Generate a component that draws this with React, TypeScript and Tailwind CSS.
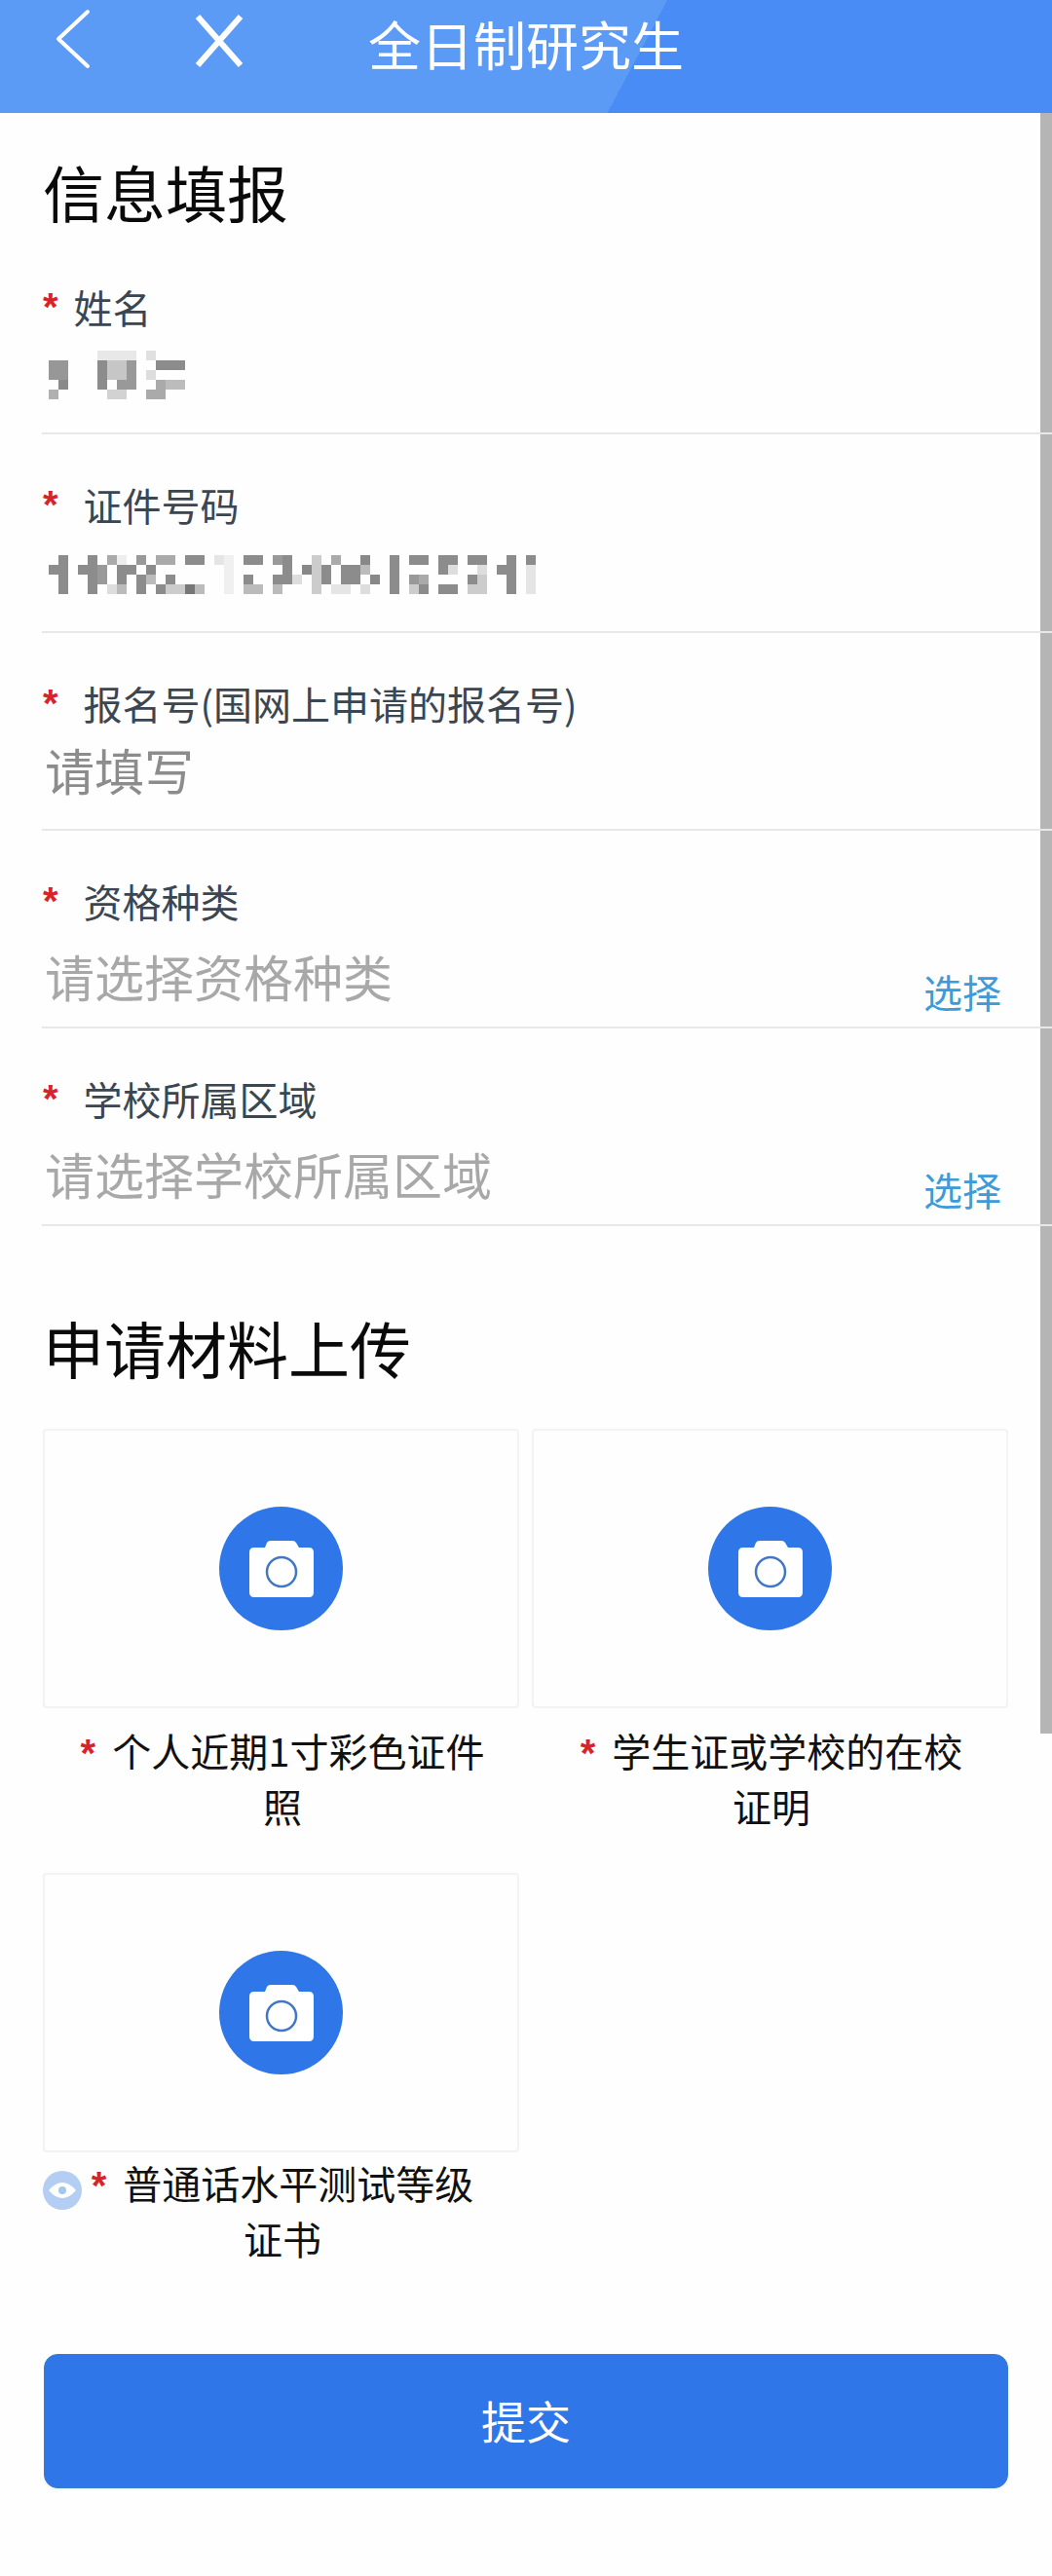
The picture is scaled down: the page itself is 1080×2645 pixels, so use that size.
import type { ReactNode } from "react";

type Cell = [number, number, number, number, string];

// blurred personal data: [x, y, w, h, colour], 10px mosaic cells
const nameCells: Cell[] = [
  [0, 10, 20, 20, "#979797"], [10, 30, 10, 10, "#8a8a8a"], [0, 40, 10, 10, "#b0b0b0"],
  [50, 0, 40, 10, "#e8e8e8"], [50, 10, 10, 30, "#8c8c8c"], [60, 10, 20, 20, "#c6c6c6"],
  [80, 10, 10, 30, "#999999"], [70, 30, 10, 10, "#999999"], [60, 40, 20, 10, "#d2d2d2"],
  [100, 0, 10, 10, "#e0e0e0"], [110, 10, 30, 10, "#8c8c8c"], [100, 20, 10, 10, "#dddddd"],
  [110, 30, 10, 10, "#aaaaaa"], [120, 30, 20, 10, "#bcbcbc"], [100, 40, 20, 10, "#aaaaaa"],
];

const idCells: Cell[] = [
  [0, 10, 10, 10, "#8c8c8c"], [10, 0, 10, 40, "#8c8c8c"],
  [30, 10, 10, 10, "#8c8c8c"], [40, 0, 10, 40, "#8c8c8c"], [50, 10, 10, 20, "#999999"],
  [60, 0, 10, 10, "#aaaaaa"], [60, 30, 10, 10, "#dddddd"], [70, 0, 10, 10, "#eeeeee"],
  [70, 10, 10, 20, "#8c8c8c"], [70, 30, 10, 10, "#bbbbbb"], [80, 10, 10, 10, "#8c8c8c"],
  [90, 0, 10, 10, "#999999"], [90, 20, 10, 20, "#8c8c8c"], [100, 10, 10, 10, "#8c8c8c"],
  [100, 20, 10, 10, "#bbbbbb"], [110, 0, 20, 10, "#aaaaaa"], [120, 20, 10, 10, "#8c8c8c"],
  [110, 30, 10, 10, "#8c8c8c"], [120, 30, 20, 10, "#cccccc"], [140, 0, 20, 10, "#8c8c8c"],
  [140, 30, 10, 10, "#777777"], [150, 30, 10, 10, "#bbbbbb"], [170, 0, 10, 10, "#e5e5e5"],
  [180, 0, 10, 40, "#f0f0f0"], [200, 0, 20, 10, "#8c8c8c"], [200, 20, 10, 10, "#8c8c8c"],
  [200, 30, 20, 10, "#bbbbbb"], [230, 0, 10, 10, "#999999"], [240, 0, 10, 30, "#8c8c8c"],
  [230, 20, 10, 10, "#8c8c8c"], [230, 30, 10, 10, "#bbbbbb"], [250, 20, 10, 10, "#dddddd"],
  [260, 10, 10, 10, "#888888"], [270, 0, 10, 40, "#cccccc"], [280, 10, 10, 20, "#8c8c8c"],
  [290, 0, 10, 10, "#aaaaaa"], [290, 30, 20, 10, "#e5e5e5"], [300, 10, 20, 20, "#8c8c8c"],
  [320, 0, 10, 10, "#888888"], [320, 10, 10, 10, "#bbbbbb"], [320, 30, 10, 10, "#dddddd"],
  [330, 20, 10, 10, "#888888"], [350, 0, 10, 40, "#8c8c8c"], [370, 0, 20, 10, "#8c8c8c"],
  [370, 20, 10, 10, "#999999"], [380, 20, 10, 10, "#aaaaaa"], [370, 30, 10, 10, "#cccccc"],
  [380, 30, 10, 10, "#8c8c8c"], [400, 0, 20, 10, "#8c8c8c"], [400, 10, 10, 10, "#8c8c8c"],
  [410, 10, 10, 10, "#dddddd"], [400, 30, 20, 10, "#8c8c8c"], [430, 0, 20, 10, "#8c8c8c"],
  [440, 10, 10, 10, "#dddddd"], [430, 20, 10, 10, "#8c8c8c"], [440, 20, 10, 10, "#cccccc"],
  [430, 30, 20, 10, "#cccccc"], [460, 10, 10, 10, "#8c8c8c"], [470, 0, 10, 40, "#8c8c8c"],
  [490, 0, 10, 10, "#8c8c8c"], [490, 10, 10, 30, "#e5e5e5"],
];

function Mosaic({ cells, width, height }: { cells: Cell[]; width: number; height: number }) {
  return (
    <svg width={width} height={height} className="block blur-[0.6px]">
      {cells.map(([x, y, w, h, fill], i) => (
        <rect key={i} x={x} y={y} width={w} height={h} fill={fill} />
      ))}
    </svg>
  );
}

function Star({ className }: { className: string }) {
  return <span className={`font-['Liberation_Sans',sans-serif] font-bold leading-none text-[#d9232a] ${className}`}>*</span>;
}

function Field({ label, gap, children }: { label: string; gap: string; children: ReactNode }) {
  return (
    <div className="relative ml-[43px] h-[203.3px] border-b-2 border-[#e8e8e8] pt-[47px]">
      <div className="flex h-[50px] items-center text-[40px] leading-[50px] text-[#3b4650]">
        <Star className={`ml-px ${gap}`} />
        <span>{label}</span>
      </div>
      {children}
    </div>
  );
}

function SelectField({ label, placeholder }: { label: string; placeholder: string }) {
  return (
    <Field label={label} gap="mr-[26px]">
      <div className="ml-[3px] mt-[22px] flex justify-between pr-[52px]">
        <span className="text-[51px] leading-[60px] text-[#a8a8a8]">{placeholder}</span>
        <span className="mt-[21px] text-[40px] leading-[50px] text-[#3d9bd9]">选择</span>
      </div>
    </Field>
  );
}

function CameraBadge() {
  return (
    <div className="flex h-[127px] w-[127px] items-center justify-center rounded-full bg-[#2f77e8]">
      <svg width="66" height="58" viewBox="0 0 66 58">
        <path
          d="M16 7 L18 2 Q19 0 22 0 H44 Q47 0 48 2 L51 7 H61 Q66 7 66 12 V53 Q66 58 61 58 H5 Q0 58 0 53 V12 Q0 7 5 7 Z"
          fill="#ffffff"
        />
        <circle cx="33" cy="32" r="15" fill="#ffffff" stroke="#4277c6" strokeWidth="2.5" />
      </svg>
    </div>
  );
}

function UploadCard({ first, second, mt, eye }: { first: string; second: string; mt: string; eye?: boolean }) {
  return (
    <div>
      <div className="flex h-[287px] items-center justify-center rounded border-2 border-[#f3f3f3]">
        <CameraBadge />
      </div>
      <div className={`relative pl-[3px] text-center text-[40px] leading-[57px] text-[#111111] ${mt}`}>
        {eye && (
          <svg width="40" height="40" viewBox="0 0 40 40" className="absolute left-0 top-[16px]">
            <circle cx="20" cy="20" r="20" fill="#b3cdf3" />
            <path d="M6 20 Q20 4 34 20 Q20 36 6 20 Z" fill="#ffffff" />
            <circle cx="20" cy="20" r="4" fill="#a3c8ee" />
          </svg>
        )}
        <Star className="mr-[17px]" />
        {first}
        <br />
        {second}
      </div>
    </div>
  );
}

export default function App() {
  return (
    <div className="relative h-[2645px] w-[1080px] overflow-hidden bg-[#fefefe] font-['Noto_Sans_CJK_SC',sans-serif]">
      <header className="relative flex h-[116px] items-start bg-[linear-gradient(118deg,#5b9bf5_605px,#4a8cf5_605px)] text-white">
        <svg width="44" height="68" viewBox="0 0 44 68" fill="none" className="ml-[52px] mt-[6px]">
          <path d="M38 6 L8 34 L38 62" stroke="#ffffff" strokeWidth="4" strokeLinecap="round" strokeLinejoin="round" />
        </svg>
        <svg width="50" height="54" viewBox="0 0 50 54" fill="none" className="ml-[104px] mt-[15px]">
          <path d="M3 2 L47 52 M47 2 L3 52" stroke="#ffffff" strokeWidth="6" />
        </svg>
        <h1 className="absolute left-0 right-0 top-[10px] text-center text-[54px] font-normal leading-[70px]">
          全日制研究生
        </h1>
      </header>

      <div className="absolute right-0 top-[116px] h-[1664px] w-[12px] bg-[#b5b5b5]" />

      <h2 className="mb-[3px] ml-[44px] mt-[36px] text-[63px] font-normal leading-[88px] text-[#0a0a0a]">信息填报</h2>

      <Field label="姓名" gap="mr-[16px]">
        <div className="ml-[7px] mt-[20px]">
          <Mosaic cells={nameCells} width={140} height={50} />
        </div>
      </Field>
      <Field label="证件号码" gap="mr-[26px]">
        <div className="ml-[7px] mt-[27px]">
          <Mosaic cells={idCells} width={500} height={40} />
        </div>
      </Field>
      <Field label="报名号(国网上申请的报名号)" gap="mr-[26px]">
        <div className="ml-[3px] mt-[13px] text-[51px] leading-[60px] text-[#8c8c8c]">请填写</div>
      </Field>
      <SelectField label="资格种类" placeholder="请选择资格种类" />
      <SelectField label="学校所属区域" placeholder="请选择学校所属区域" />

      <h2 className="ml-[44px] mt-[80px] text-[63px] font-normal leading-[88px] text-[#0a0a0a]">申请材料上传</h2>

      <div className="ml-[44px] mt-[40px] grid w-[991px] grid-cols-2 gap-x-[13px] gap-y-[40px]">
        <UploadCard first="个人近期1寸彩色证件" second="照" mt="mt-[15px]" />
        <UploadCard first="学生证或学校的在校" second="证明" mt="mt-[15px]" />
        <UploadCard first="普通话水平测试等级" second="证书" mt="mt-[3px]" eye />
      </div>

      <button
        type="button"
        className="ml-[45px] mt-[90px] block h-[138px] w-[990px] rounded-[14px] border border-[#3a7cc8] bg-[#2f77e8] pb-[4px] text-[46px] text-white"
      >
        提交
      </button>
    </div>
  );
}
